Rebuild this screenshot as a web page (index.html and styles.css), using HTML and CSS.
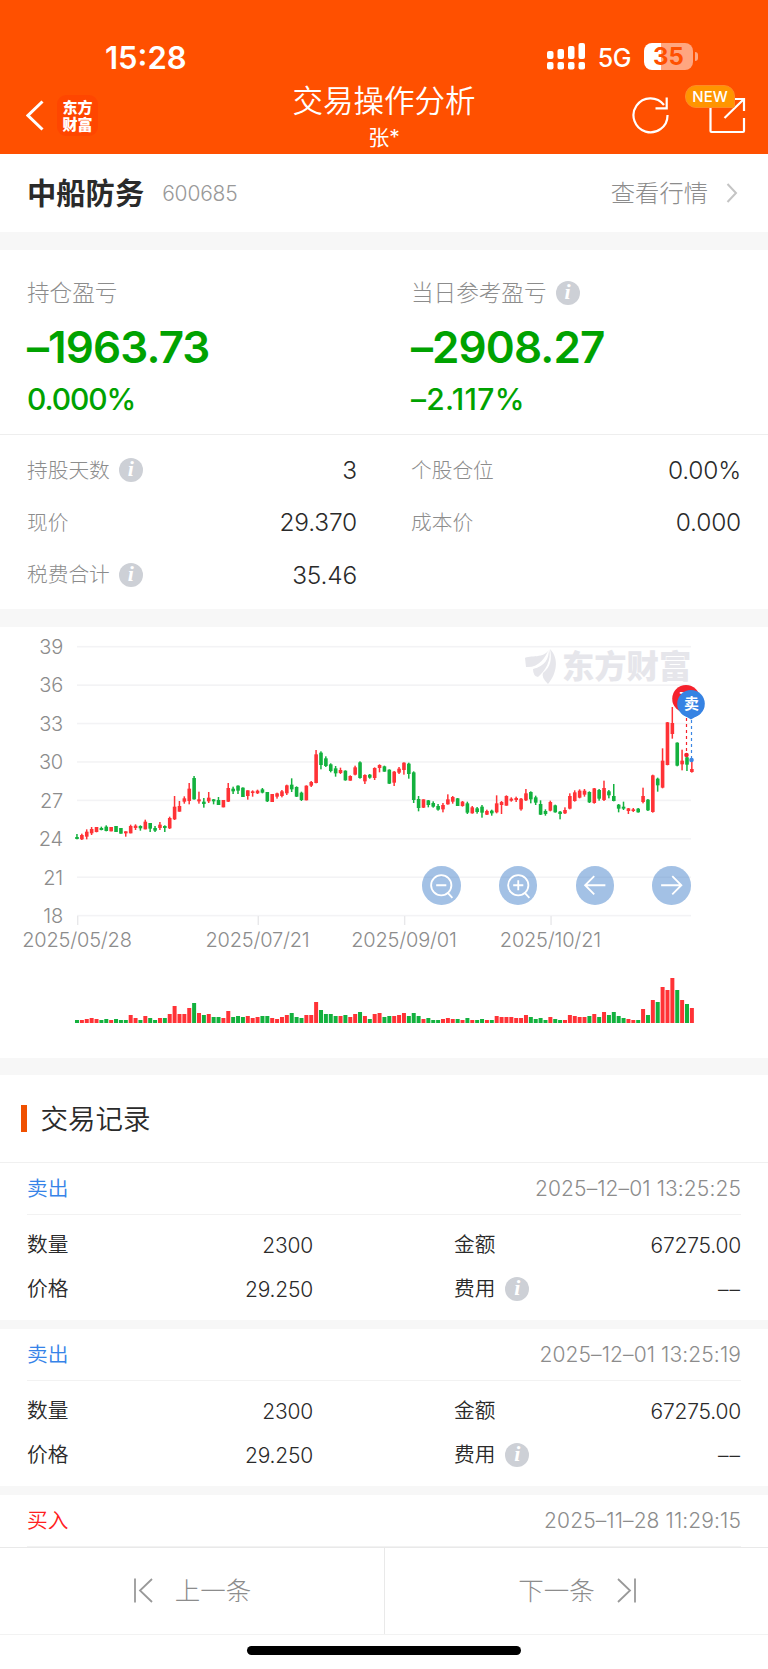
FILE: index.html
```html
<!DOCTYPE html>
<html lang="zh-CN">
<head>
    <meta charset="UTF-8">
    <meta name="viewport" content="width=device-width, initial-scale=1.0">
    <title>交易操作分析</title>
    <link rel="stylesheet" href="styles.css">
</head>
<body>
    <header class="header">
        <div class="status-bar">
            <span class="time">15:28</span>
            <div class="status-icons">
                <svg class="signal" width="38" height="27" viewBox="0 0 38 27" fill="#fff">
                    <rect x="0" y="8" width="6.5" height="8" rx="2"/>
                    <rect x="10.5" y="6" width="6.5" height="10" rx="2"/>
                    <rect x="21" y="3" width="6.5" height="13" rx="2"/>
                    <rect x="31.5" y="0" width="6.5" height="16" rx="2"/>
                    <rect x="0" y="19" width="6.5" height="7.5" rx="2"/>
                    <rect x="10.5" y="19" width="6.5" height="7.5" rx="2"/>
                    <rect x="21" y="19" width="6.5" height="7.5" rx="2"/>
                    <rect x="31.5" y="19" width="6.5" height="7.5" rx="2"/>
                </svg>
                <span class="network">5G</span>
                <span class="battery">35</span>
                <span class="battery-cap"></span>
            </div>
        </div>
        <div class="nav">
            <div class="nav-left">
                <svg width="18" height="31" viewBox="0 0 18 31" fill="none" stroke="#fff" stroke-width="3">
                    <path d="M16.500 1.500 L2 15.500 L16.500 29.500"/>
                </svg>
                <div class="logo">东方<br>财富</div>
            </div>
            <div class="nav-title">
                <h1>交易操作分析</h1>
                <p>张*</p>
            </div>
            <div class="nav-right">
                <svg width="38" height="38" viewBox="0 0 38 38" fill="none" stroke="#fff" stroke-width="2.200">
                    <path d="M35.500 19 A17 17 0 1 1 32 9"/>
                    <path d="M34.700 1.500 V12.300 H23.500"/>
                </svg>
                <div class="share">
                    <svg width="37" height="37" viewBox="0 0 37 37" fill="none" stroke="#fff" stroke-width="2.200">
                        <path d="M1.500 8 V34 Q1.500 35 2.500 35 H34 Q35 35 35 34 V21"/>
                        <path d="M24 2 H35 V14 M35 2 L15.500 21"/>
                    </svg>
                    <span class="badge">NEW</span>
                </div>
            </div>
        </div>
    </header>

    <main>
        <section class="stock">
            <h2>中船防务</h2>
            <span class="code">600685</span>
            <a class="quote">查看行情</a>
            <svg width="12" height="20" viewBox="0 0 12 20" fill="none" stroke="#c4c4c4" stroke-width="2">
                <path d="M1.500 1 L10 10 L1.500 19"/>
            </svg>
        </section>

        <section class="profit">
            <div class="profit-item">
                <div class="label"><span>持仓盈亏</span></div>
                <div class="amount">–1963.73</div>
                <div class="percent">0.000%</div>
            </div>
            <div class="profit-item">
                <div class="label"><span>当日参考盈亏</span><i class="info">i</i></div>
                <div class="amount">–2908.27</div>
                <div class="percent wide">–2.117%</div>
            </div>
        </section>

        <section class="details">
            <div class="detail"><span>持股天数</span><i class="info">i</i><b>3</b></div>
            <div class="detail"><span>个股仓位</span><b>0.00%</b></div>
            <div class="detail"><span>现价</span><b>29.370</b></div>
            <div class="detail"><span>成本价</span><b>0.000</b></div>
            <div class="detail"><span>税费合计</span><i class="info">i</i><b>35.46</b></div>
        </section>

        <section class="chart">
            <svg id="kline" width="768" height="430" viewBox="0 0 768 430">
                <g id="grid"></g>
                <g class="watermark">
                    <path d="M525 31 C529 28 545 32 549 22 C545 31 539 41 526 40 Z"/>
                    <path d="M533 42 C545 39 549 32 549 22 C552 33 545 44 538 50 Q533 49 533 42 Z"/>
                    <path d="M550 22 C560 32 556 48 548 57 Q541 50 543 46 C551 40 552 31 550 22 Z"/>
                    <text x="562" y="51">东方财富</text>
                </g>
                <g id="candles"></g>
                <g id="volume"></g>
                <g class="marker">
                    <path d="M686.500 85 V126" stroke="#f5222d" stroke-width="1.200" stroke-dasharray="3 3"/>
                    <path d="M691.500 93 V132" stroke="#3b86e3" stroke-width="1.200" stroke-dasharray="3 3"/>
                    <circle cx="686.500" cy="128" r="2.300" fill="#f5222d"/>
                    <circle cx="691.500" cy="133" r="2.300" fill="#3b86e3"/>
                    <circle cx="686" cy="71.700" r="13.800" fill="#f5222d"/>
                    <text x="686" y="77">买</text>
                    <path d="M682 87 L691 92.600 L700 87 Z" fill="#3683e3"/>
                    <circle cx="691" cy="76.700" r="13.800" fill="#3683e3"/>
                    <text x="691.500" y="82">卖</text>
                </g>
            </svg>
            <div class="chart-tools">
                <button>
                    <svg viewBox="0 0 38 38"><circle cx="19" cy="19" r="10"/><path d="M14 19 H24 M25 26 L30 31.500"/></svg>
                </button>
                <button>
                    <svg viewBox="0 0 38 38"><circle cx="19" cy="19" r="10"/><path d="M14 19 H24 M19 14 V24 M25 26 L30 31.500"/></svg>
                </button>
                <button>
                    <svg viewBox="0 0 38 38"><path d="M29 19 H9 M18 10 L9 19 L18 28"/></svg>
                </button>
                <button>
                    <svg viewBox="0 0 38 38"><path d="M9 19 H29 M20 10 L29 19 L20 28"/></svg>
                </button>
            </div>
        </section>

        <section class="records">
            <h3><span>交易记录</span></h3>
            <div class="record">
                <div class="record-head"><span class="sell">卖出</span><time>2025–12–01 13:25:25</time></div>
                <div class="record-body">
                    <span class="name">数量</span><span class="num">2300</span>
                    <span class="name">金额</span><span class="num">67275.00</span>
                    <span class="name">价格</span><span class="num">29.250</span>
                    <span class="name">费用<i class="info">i</i></span><span class="num dash">––</span>
                </div>
            </div>
            <div class="record">
                <div class="record-head"><span class="sell">卖出</span><time>2025–12–01 13:25:19</time></div>
                <div class="record-body">
                    <span class="name">数量</span><span class="num">2300</span>
                    <span class="name">金额</span><span class="num">67275.00</span>
                    <span class="name">价格</span><span class="num">29.250</span>
                    <span class="name">费用<i class="info">i</i></span><span class="num dash">––</span>
                </div>
            </div>
            <div class="record">
                <div class="record-head"><span class="buy">买入</span><time>2025–11–28 11:29:15</time></div>
            </div>
        </section>
    </main>

    <footer class="pager">
        <div class="pager-buttons">
            <button>
                <svg width="21" height="25" viewBox="0 0 21 25"><path d="M2 0.500 V24.500 M19 1 L7 12.500 L19 24"/></svg>
                <span>上一条</span>
            </button>
            <button>
                <span>下一条</span>
                <svg width="21" height="25" viewBox="0 0 21 25"><path d="M19 0.500 V24.500 M2 1 L14 12.500 L2 24"/></svg>
            </button>
        </div>
        <div class="home-indicator"></div>
    </footer>

    <script>
        const START_X = 77;
        const STEP = 4.88;
        const RED = '#ff3236';
        const GREEN = '#13b13e';

        // colour, high, low, body top, body bottom (three units per pixel)
        const candles = `g 642 658 651 657,r 641 660 645 658,r 628 658 635 650,r 621 645 627 640,r 621 637 621 636,
g 620 631 624 630,g 616 634 620 633,r 621 634 621 634,g 618 636 618 636,g 624 641 624 641,
r 634 650 634 640,r 614 640 618 640,r 613 630 617 624,g 616 632 618 625,r 599 628 605 628,
g 609 636 609 626,g 618 636 624 632,r 606 630 614 624,g 616 636 618 624,r 590 627 594 625,
r 528 600 560 598,r 543 575 558 575,r 529 551 535 545,r 489 553 506 543,g 468 539 474 538,
r 515 551 538 544,g 534 563 545 552,r 516 549 533 544,g 537 553 538 544,g 531 555 540 555,
r 540 562 540 562,r 489 546 504 545,g 500 522 506 514,g 496 522 497 512,g 502 531 503 531,
r 511 539 511 528,r 511 530 514 519,r 509 522 512 520,g 504 520 508 518,g 516 546 516 544,
r 522 546 522 546,r 518 536 520 530,r 510 532 514 528,r 494 525 496 520,g 475 516 494 508,
g 499 531 501 530,g 515 543 518 540,r 496 541 497 541,r 483 501 486 497,r 390 490 403 489,
g 394 448 398 435,g 409 441 415 438,g 430 457 433 453,g 438 470 445 460,r 443 462 450 459,
g 451 482 452 481,r 466 482 468 482,r 437 466 442 464,g 424 476 427 474,r 463 492 465 484,
g 462 476 464 473,r 442 480 444 474,r 433 457 435 444,g 437 455 439 455,g 448 492 449 491,
r 453 498 455 488,r 441 462 446 458,r 427 464 428 450,g 428 476 431 462,g 454 549 457 540,
g 528 574 537 564,r 538 564 538 563,g 540 562 541 555,g 544 563 549 560,g 552 572 558 569,
r 549 577 555 568,r 523 554 538 553,r 528 551 531 545,g 534 558 535 558,r 543 560 545 558,
g 545 582 550 578,r 558 581 562 580,g 561 581 565 576,g 555 593 560 578,r 569 585 573 584,
g 569 587 572 580,r 526 580 550 577,r 543 582 546 555,r 526 557 528 557,r 532 545 536 542,
r 530 546 534 540,r 534 572 536 568,r 507 543 520 541,g 514 550 516 538,g 527 555 532 548,
g 541 585 552 584,g 568 587 573 582,r 542 574 546 572,g 554 578 556 577,g 573 598 575 582,
r 562 582 570 580,r 520 568 528 566,r 511 545 517 543,r 508 535 512 533,r 507 530 512 524,
g 514 549 516 547,r 504 551 505 549,g 507 542 510 536,r 482 543 504 540,g 510 535 514 526,
g 492 544 528 543,g 552 577 554 566,g 545 570 560 566,r 564 582 565 573,r 564 576 568 573,
g 564 578 566 577,r 503 550 528 546,g 537 573 539 571,r 464 578 466 576,g 473 515 476 496,
r 385 505 422 503,r 306 436 307 435,r 261 356 309 342,g 367 439 368 437,r 389 451 422 433,
g 403 453 412 434,r 424 458 447 456`.split(',').map(c => c.trim().split(' '));

        // colour and height of every volume bar
        const volume = `g3 r3 r4 r5 r4 g3 g4 r3 g4 g3 g3 r8 r5 g3 r7 g5 g3 r5 g5 r9 r17 r9 r9 r15 g20 r10 g8 r9 g6 g6
r5 r12 g6 g7 g6 r7 r5 r6 g7 g7 r5 r4 r6 r8 g10 g6 g5 r8 r8 r21 g13 g9 g9 g7 r7 g8 r6 r9 g11 r7
g4 r9 r10 g6 g7 r7 r8 r10 g7 g10 g7 r4 g5 g3 g3 r4 r5 r4 g4 r3 g5 r3 g3 g4 r3 g3 r7 r6 r6 r6
r5 r5 r8 g6 g4 g5 g3 r6 g4 g3 r3 r8 r7 r6 r6 g7 r9 g6 r11 g8 g11 g7 g5 r4 r3 g3 r14 g8 r23 g21
r36 r33 r45 g33 r23 g19 r15`.split(/\s+/);

        const color = c => (c === 'r' ? RED : GREEN);
        const rect = (x, y, w, h, fill) => `<rect x="${x}" y="${y}" width="${w}" height="${h}" fill="${fill}"/>`;

        // Horizontal lines and price labels
        let grid = '';
        for (let i = 0; i < 8; i++) {
            const y = 19.7 + i * 38.42;
            grid += rect(77, y - 0.8, 614, 1.6, '#f3f3f5');
            grid += `<text class="axis" x="63" y="${y + 7.3}" text-anchor="end">${39 - i * 3}</text>`;
        }

        // Date labels
        [[0, '2025/05/28'], [37, '2025/07/21'], [67, '2025/09/01'], [97, '2025/10/21']].forEach(([i, date]) => {
            const x = START_X + i * STEP;
            grid += rect(x, 289, 1.4, 9, '#e8e8ea');
            grid += `<text class="axis" x="${x}" y="319.500" text-anchor="middle">${date}</text>`;
        });
        document.getElementById('grid').innerHTML = grid;

        document.getElementById('candles').innerHTML = candles.map(([c, high, low, top, bottom], i) => {
            const x = START_X + i * STEP;
            const y = v => v / 3 - 7;
            return rect(x - 0.8, y(high), 1.5, (low - high) / 3, color(c)) +
                rect(x - 1.8, y(top), 3.6, (bottom - top) / 3, color(c));
        }).join('');

        document.getElementById('volume').innerHTML = volume.map((v, i) => {
            const h = Number(v.slice(1));
            return rect(START_X + i * STEP - 2, 396 - h, 4, h, color(v[0]));
        }).join('');
    </script>
</body>
</html>
```
FILE: styles.css
```css
* {
    box-sizing: border-box;
    margin: 0;
    padding: 0;
}

body {
    width: 768px;
    height: 1669px;
    overflow: hidden;
    display: flex;
    flex-direction: column;
    font-family: Inter, 'Noto Sans CJK SC', sans-serif;
    font-weight: 300;
    background-color: #fff;
    color: #2a2a2a;
}

button {
    border: none;
    background: none;
    font-family: inherit;
    font-weight: inherit;
}

/* Header */
.header {
    height: 154px;
    flex-shrink: 0;
    background-color: #ff5000;
    color: #fff;
}

.status-bar {
    height: 80px;
    padding: 34px 70px 0 105px;
    display: flex;
    justify-content: space-between;
    align-items: center;
}

.time {
    font-size: 31px;
    font-weight: 600;
}

.status-icons {
    display: flex;
    align-items: center;
    padding-bottom: 1px;
}

.network {
    margin: 2px 13px 0 13px;
    font-size: 25px;
    font-weight: 500;
    letter-spacing: -0.5px;
}

.battery {
    width: 49px;
    height: 27px;
    border-radius: 8px;
    background: linear-gradient(to right, #fff 35%, #ffa680 35%);
    color: #ff5000;
    font-size: 24px;
    font-weight: 700;
    line-height: 27px;
    text-align: center;
}

.battery-cap {
    width: 3px;
    height: 9px;
    margin-left: 2px;
    border-radius: 0 4px 4px 0;
    background-color: #ffa680;
}

.nav {
    height: 74px;
    padding: 0 22px;
    display: grid;
    grid-template-columns: 1fr 220px 1fr;
}

.nav-left {
    display: flex;
    align-items: center;
    gap: 13px;
    padding: 0 0 3px 4px;
}

.logo {
    width: 41px;
    height: 41px;
    padding-top: 3px;
    border-radius: 9px;
    background-color: #ff4600;
    font-family: 'Noto Sans CJK SC', sans-serif;
    font-size: 15px;
    font-weight: 900;
    line-height: 17px;
    text-align: center;
}

.nav-title {
    text-align: center;
}

.nav-title h1 {
    margin-top: 1px;
    font-size: 30.5px;
    font-weight: 350;
    line-height: 40px;
    white-space: nowrap;
}

.nav-title p {
    margin-top: 5px;
    font-size: 21px;
    font-weight: 400;
    line-height: 24px;
}

.nav-right {
    display: flex;
    justify-content: flex-end;
    align-items: center;
    gap: 39px;
    padding-bottom: 4px;
}

.nav-right svg {
    display: block;
}

.share {
    position: relative;
}

.badge {
    position: absolute;
    left: -24px;
    top: -12px;
    width: 50px;
    height: 23px;
    border: 1px solid #ff8a24;
    border-radius: 11px 11px 2px 11px;
    background-color: #ff9500;
    font-size: 15px;
    font-weight: 500;
    line-height: 21px;
    text-align: center;
}

/* Stock name */
.stock {
    height: 78px;
    padding: 0 30px 0 27px;
    display: flex;
    align-items: center;
}

.stock h2 {
    padding-bottom: 4px;
    font-size: 29.3px;
    font-weight: 600;
}

.code {
    margin-left: 18px;
    color: #999;
    font-size: 21px;
    letter-spacing: -0.2px;
}

.quote {
    margin-left: auto;
    margin-right: 18px;
    padding-bottom: 3px;
    color: #8c8c8c;
    font-size: 24.3px;
}

/* Profit summary */
.profit {
    height: 203px;
    padding: 26px 27px 0;
    border-top: 18px solid #f7f7f7;
    border-bottom: 1px solid #eee;
    display: grid;
    grid-template-columns: 384px 1fr;
}

.label {
    display: flex;
    align-items: center;
    height: 33px;
    color: #8c8c8c;
    font-size: 22.6px;
}

.label span {
    padding-bottom: 3px;
}

.amount {
    margin-top: 11px;
    color: #00a200;
    font-size: 44px;
    font-weight: 600;
    line-height: 54px;
    letter-spacing: -0.9px;
}

.percent {
    margin-top: 5px;
    color: #00a200;
    font-size: 30px;
    font-weight: 500;
    line-height: 40px;
    letter-spacing: -1.1px;
}

.percent.wide {
    letter-spacing: 0.3px;
}

.info {
    display: inline-block;
    flex-shrink: 0;
    width: 24px;
    height: 24px;
    margin-left: 9px;
    border-radius: 50%;
    background-color: #cdd0d6;
    color: #fff;
    font-family: 'Liberation Serif', serif;
    font-size: 22px;
    font-style: italic;
    font-weight: 700;
    line-height: 22px;
    text-align: center;
}

/* Holding details */
.details {
    height: 174px;
    padding: 9px 27px 0 27px;
    display: grid;
    grid-template-columns: 330px 330px;
    grid-auto-rows: 52.3px;
    column-gap: 54px;
}

.detail {
    display: flex;
    align-items: center;
}

.detail span {
    padding-bottom: 3px;
    color: #8c8c8c;
    font-size: 20.7px;
}

.detail b {
    margin-left: auto;
    font-size: 24.5px;
    font-weight: 300;
    letter-spacing: -0.2px;
}

/* Chart */
.chart {
    position: relative;
    height: 449px;
    border-top: 18px solid #f7f7f7;
}

#kline {
    display: block;
}

.axis {
    fill: #8c8c8c;
    font-size: 20px;
    letter-spacing: -0.2px;
}

.watermark {
    fill: #e6e6eb;
    font-family: 'Noto Sans CJK SC', sans-serif;
    font-size: 32.3px;
    font-weight: 900;
}

.marker text {
    fill: #fff;
    font-size: 15px;
    font-weight: 700;
    text-anchor: middle;
}

.chart-tools {
    position: absolute;
    left: 422px;
    top: 239px;
    display: flex;
    gap: 38.3px;
}

.chart-tools button {
    width: 38.5px;
    height: 38.5px;
    border-radius: 50%;
    background-color: rgba(78, 136, 206, 0.52);
}

.chart-tools svg {
    display: block;
    fill: none;
    stroke: #fff;
    stroke-width: 1.8;
}

/* Trade records */
.records h3 {
    height: 105px;
    padding-left: 21px;
    border-top: 17px solid #f7f7f7;
    border-bottom: 1px solid #f0f0f0;
    display: flex;
    align-items: center;
    font-size: 27.5px;
    font-weight: 350;
}

.records h3 span {
    padding-bottom: 4px;
}

.records h3::before {
    content: '';
    width: 5.5px;
    height: 27px;
    margin-right: 14px;
    background-color: #f05000;
}

.record {
    margin: 0 27px;
}

.record + .record::before {
    content: '';
    display: block;
    height: 9px;
    margin: 0 -27px;
    background-color: #f7f7f7;
}

.record-head {
    height: 52px;
    border-bottom: 1px solid #f2f2f2;
    display: flex;
    align-items: center;
    justify-content: space-between;
    font-size: 20.7px;
}

.record-head span {
    padding-bottom: 3px;
    font-weight: 350;
}

.record-head time {
    color: #8c8c8c;
    font-size: 21px;
    letter-spacing: 0.1px;
}

.sell {
    color: #3683e8;
}

.buy {
    color: #ff2020;
}

.record-body {
    height: 105px;
    padding-top: 8px;
    display: grid;
    grid-template-columns: 60px 226px 231px 1fr;
    grid-template-rows: 44px 44px;
    align-items: center;
    font-size: 20.7px;
}

.record-body span {
    display: flex;
    align-items: center;
}

.record-body .name {
    height: 32px;
    line-height: 32px;
    align-items: flex-start;
    font-weight: 350;
}

.record-body .name .info {
    margin-top: 4px;
    margin-left: 10px;
    line-height: 22px;
}

.record-body .name:nth-child(4n + 3) {
    padding-left: 141px;
    white-space: nowrap;
}

.record-body .num {
    justify-content: flex-end;
    font-size: 21px;
    letter-spacing: -0.2px;
}

.record-body .dash {
    letter-spacing: 1px;
}

/* Bottom bar */
.pager {
    height: 123px;
    margin-top: auto;
    border-top: 1px solid #e9e9e9;
    background-color: #fff;
}

.pager-buttons {
    height: 87px;
    border-bottom: 1px solid #f2f2f2;
    display: flex;
}

.pager button {
    width: 50%;
    display: flex;
    align-items: center;
    justify-content: center;
    gap: 21px;
    color: #8c8c8c;
    font-size: 25.5px;
}

.pager button span {
    padding-bottom: 5px;
}

.pager button + button {
    border-left: 1px solid #e9e9e9;
    padding-left: 2px;
}

.pager svg {
    margin-bottom: 2px;
    fill: none;
    stroke: #999;
    stroke-width: 1.8;
}

.home-indicator {
    width: 274px;
    height: 9px;
    margin: 11px auto 0;
    border-radius: 5px;
    background-color: #000;
}
```
